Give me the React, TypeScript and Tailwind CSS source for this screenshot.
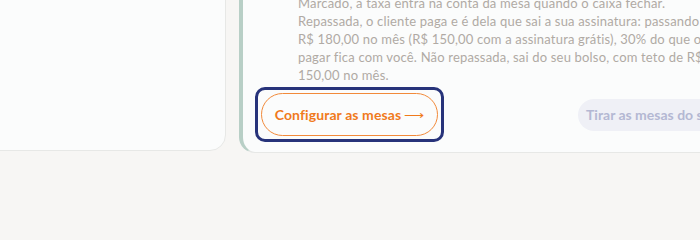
export default function App() {
  return (
    <div
      className="h-[240px] w-[700px] overflow-hidden bg-[#f7f6f4]"
      style={{ fontFamily: "Lato, 'Noto Sans', sans-serif" }}
    >
      <div className="-mt-[30px] flex gap-[13px]">
        {/* Left card, mostly off-screen */}
        <div className="-ml-[40px] h-[181px] w-[266px] shrink-0 rounded-2xl border border-[#e7e8e6] bg-[#fbfcfc]" />

        {/* Right card */}
        <div className="w-[520px] shrink-0 rounded-2xl border border-l-4 border-[#e7e8e6] border-l-[#b8cfc6] bg-[#fbfcfc] pb-[10px] pt-[23px]">
          <p className="whitespace-nowrap pl-[55px] text-[13px] leading-[18px] tracking-[0.18px] text-[#b0aaa4]">
            Marcado, a taxa entra na conta da mesa quando o caixa fechar.
            <br />
            Repassada, o cliente paga e é dela que sai a sua assinatura: passando do
            <br />
            R$ 180,00 no mês (R$ 150,00 com a assinatura grátis), 30% do que o cliente
            <br />
            pagar fica com você. Não repassada, sai do seu bolso, com teto de R$
            <br />
            150,00 no mês.
          </p>

          <div className="mt-[3px] flex items-center pl-[12px]">
            <div className="rounded-[10px] border-[3px] border-[#27337a] p-[3px]">
              <button className="flex h-[43px] w-[177px] items-center justify-center gap-[3px] rounded-full border border-[#f28a3a] bg-[#fbfcfc] text-[14px] font-bold tracking-[0.1px] text-[#f07a1c]">
                Configurar as mesas <span className="font-normal">⟶</span>
              </button>
            </div>
            <button className="ml-[134px] h-[32px] whitespace-nowrap rounded-full bg-[#eff0f6] px-[8px] text-[14px] font-bold text-[#b4b8d3]">
              Tirar as mesas do salão
            </button>
          </div>
        </div>
      </div>
    </div>
  )
}
